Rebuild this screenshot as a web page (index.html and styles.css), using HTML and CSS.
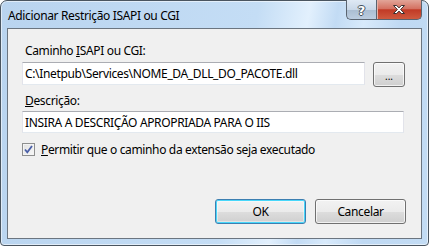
FILE: index.html
```
<!DOCTYPE html>
<html lang="pt">

<head>
    <meta charset="UTF-8">
    <title>Adicionar Restrição ISAPI ou CGI</title>
    <link rel="stylesheet" href="styles.css">
</head>

<body>
    <div class="window">
        <div class="titlebar">
            <span class="title">Adicionar Restrição ISAPI ou CGI</span>
            <div class="caption-buttons">
                <div class="cap-btn cap-help">?</div>
                <div class="cap-btn cap-close">
                    <svg width="14" height="11" viewBox="0 0 14 11">
                        <path d="M1.5 1.5h3.2l2.3 2.4 2.3-2.4h3.2l-3.9 4 3.9 4h-3.2l-2.3-2.4-2.3 2.4h-3.2l3.9-4z" fill="#fff" stroke="#3a3030" stroke-width="1" stroke-linejoin="round" />
                    </svg>
                </div>
            </div>
        </div>

        <div class="client">
            <label class="field-label">Caminho <u>I</u>SAPI ou CGI:</label>
            <div class="path-row">
                <div class="textbox path-box">C:\Inetpub\Services\NOME_DA_DLL_DO_PACOTE.dll</div>
                <button class="btn browse-btn">...</button>
            </div>

            <label class="field-label desc-label"><u>D</u>escrição:</label>
            <div class="textbox desc-box">INSIRA A DESCRIÇÃO APROPRIADA PARA O IIS</div>

            <div class="check-row">
                <span class="checkbox">
                    <svg width="9" height="9" viewBox="0 0 9 9">
                        <path d="M1 4.5l2.3 2.8L8 1" fill="none" stroke="#4a5fa8" stroke-width="1.8" />
                    </svg>
                </span>
                <span class="check-label"><u>P</u>ermitir que o caminho da extensão seja executado</span>
            </div>

            <div class="actions">
                <button class="btn btn-default">OK</button>
                <button class="btn">Cancelar</button>
            </div>
        </div>
    </div>
</body>

</html>
```

FILE: styles.css
```
* {
    margin: 0;
    padding: 0;
    box-sizing: border-box;
}

body {
    width: 429px;
    height: 246px;
    background: #ffffff;
    font-family: "Noto Sans", "Liberation Sans", sans-serif;
    font-size: 12px;
    letter-spacing: -0.35px;
    color: #000000;
    overflow: hidden;
}

.window {
    width: 429px;
    height: 246px;
    border: 1px solid #4a5560;
    border-radius: 7px 7px 4px 4px;
    background: linear-gradient(100deg, #b9d4ef 0%, #c4ddf5 55%, #e2f0fd 66%, #c2dbf4 72%, #d8eafb 78%, #bfd9f3 86%, #c3dcf4 100%);
    padding: 0 6px 6px 6px;
    display: flex;
    flex-direction: column;
    box-shadow: inset 0 0 0 1px rgba(255, 255, 255, 0.55);
}

.titlebar {
    height: 27px;
    display: flex;
    align-items: flex-start;
    justify-content: space-between;
    flex-shrink: 0;
}

.title {
    padding: 7px 0 0 1px;
    line-height: 15px;
    color: #000000;
}

.caption-buttons {
    display: flex;
    margin-top: -1px;
}

.cap-btn {
    height: 20px;
    display: flex;
    align-items: center;
    justify-content: center;
    border: 1px solid #5a6470;
    border-top: none;
}

.cap-help {
    width: 30px;
    border-right: none;
    border-radius: 0 0 0 5px;
    background: linear-gradient(#dfe9f4 0%, #c9d8e8 50%, #aabdd1 52%, #bccde0 100%);
    font-family: "DejaVu Sans", sans-serif;
    font-weight: bold;
    font-size: 13px;
    letter-spacing: 0;
    color: #ffffff;
    text-shadow: 1px 0 0 #44505c, -1px 0 0 #44505c, 0 1px 0 #44505c, 0 -1px 0 #44505c;
    padding-top: 1px;
}

.cap-close {
    width: 46px;
    border-radius: 0 0 5px 0;
    background: linear-gradient(#e2a598 0%, #d47262 45%, #c13a26 52%, #cf5a3f 100%);
    box-shadow: inset 1px 0 0 #e7b0a6;
}

.client {
    flex: 1;
    background: #f0f0f0;
    border: 1px solid #6b7580;
    padding: 14px 15px 0 14px;
    display: flex;
    flex-direction: column;
}

.field-label {
    display: block;
    line-height: 15px;
    padding-left: 3px;
}

.path-row {
    display: flex;
    align-items: flex-start;
    gap: 8px;
    margin-top: 4px;
}

.textbox {
    height: 23px;
    background: #ffffff;
    border: 1px solid #e2e3ea;
    border-top-color: #abadb3;
    border-bottom-color: #e3e9ef;
    padding: 3px 0 0 2px;
    line-height: 15px;
    white-space: nowrap;
    overflow: hidden;
}

.path-box {
    width: 343px;
}

.desc-label {
    margin-top: 6px;
}

.desc-box {
    margin-top: 3px;
    width: 382px;
    height: 22px;
}

.btn {
    font-family: inherit;
    font-size: 12px;
    letter-spacing: inherit;
    color: #000000;
    border: 1px solid #707070;
    border-radius: 3px;
    background: linear-gradient(#f2f2f2 0%, #ebebeb 50%, #dddddd 51%, #cfcfcf 100%);
    box-shadow: inset 0 0 0 1px rgba(255, 255, 255, 0.7);
    line-height: 15px;
}

.browse-btn {
    width: 32px;
    height: 25px;
    padding-top: 3px;
    font-size: 10px;
    letter-spacing: 0;
}

.check-row {
    display: flex;
    align-items: center;
    margin-top: 9px;
    height: 15px;
}

.checkbox {
    width: 13px;
    height: 13px;
    border: 1px solid #8e8f8f;
    background: linear-gradient(135deg, #e1e1e1, #f8f8f8);
    box-shadow: inset 0 0 0 1px #f4f4f4;
    display: flex;
    align-items: center;
    justify-content: center;
}

.check-label {
    margin-left: 6px;
    line-height: 15px;
}

.actions {
    display: flex;
    justify-content: flex-end;
    gap: 9px;
    margin-top: 42px;
}

.actions .btn {
    width: 91px;
    height: 25px;
}

.btn-default {
    border-color: #3c7fb1;
    box-shadow: inset 0 0 0 1px #48d7fa, inset 0 0 0 2px rgba(255, 255, 255, 0.4);
}
```
